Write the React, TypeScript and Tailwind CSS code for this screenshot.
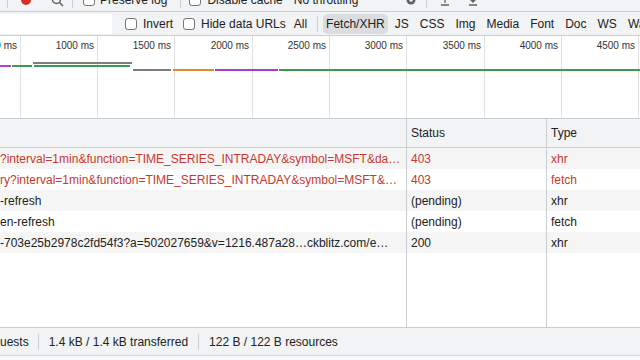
import React from "react";

const tickWidths = [21, 77, 77, 78, 77, 77, 78, 77, 77];
const tickLabels = ["500 ms", "1000 ms", "1500 ms", "2000 ms", "2500 ms", "3000 ms", "3500 ms", "4000 ms", "4500 ms"];

const bars = [
  { left: 33, width: 99, top: 26, cls: "bg-[#7d7d7d]" },
  { left: 0, width: 11, top: 29, cls: "bg-[#b23fcf]" },
  { left: 12, width: 20, top: 29, cls: "bg-[#3c9a52]" },
  { left: 34, width: 96, top: 29, cls: "bg-[#3c9a52]" },
  { left: 133, width: 38, top: 33, cls: "bg-[#7d7d7d]" },
  { left: 173, width: 41, top: 33, cls: "bg-[#e08a2c]" },
  { left: 215, width: 63, top: 33, cls: "bg-[#a63ec2]" },
  { left: 279, width: 361, top: 33, cls: "bg-[#3c9a52]" },
];

const rows = [
  {
    name: "?interval=1min&function=TIME_SERIES_INTRADAY&symbol=MSFT&dat…",
    status: "403",
    type: "xhr",
    error: true,
  },
  {
    name: "ry?interval=1min&function=TIME_SERIES_INTRADAY&symbol=MSFT&d…",
    status: "403",
    type: "fetch",
    error: true,
  },
  { name: "-refresh", status: "(pending)", type: "xhr", error: false },
  { name: "en-refresh", status: "(pending)", type: "fetch", error: false },
  {
    name: "-703e25b2978c2fd54f3?a=502027659&v=1216.487a28…ckblitz.com/e…",
    status: "200",
    type: "xhr",
    error: false,
  },
];

const filters = ["JS", "CSS", "Img", "Media", "Font", "Doc", "WS", "Wasm"];

function Checkbox({ className = "" }: { className?: string }) {
  return <span className={`block w-[12px] h-[12px] shrink-0 rounded-[3px] border border-[#767676] bg-white ${className}`} />;
}

function Sep({ className = "" }: { className?: string }) {
  return <span className={`block w-px h-[16px] bg-[#cbcdd1] shrink-0 ${className}`} />;
}

export default function App() {
  return (
    <div className="w-[640px] h-[360px] overflow-hidden bg-white flex flex-col font-['Liberation_Sans',Arial,sans-serif] text-[12px] text-[#222]">
      {/* Top toolbar, mostly scrolled out of view */}
      <div className="h-[12px] shrink-0 overflow-hidden bg-[#f1f3f4] border-b border-[#cacdd1]">
        <div className="h-[24px] -mt-[12px] flex items-center whitespace-nowrap">
          <Sep className="ml-[7px]" />
          <span className="block ml-[13px] w-[10px] h-[10px] rounded-full bg-[#d93025] shrink-0" />
          <svg className="ml-[20px] shrink-0" width="13" height="13" viewBox="0 0 13 13" fill="none" stroke="#5f6368" strokeWidth="1.5">
            <circle cx="5.5" cy="5.5" r="4" />
            <path d="M8.5 8.5l3.5 3.5" />
          </svg>
          <Sep className="ml-[8px]" />
          <Checkbox className="ml-[10px]" />
          <span className="ml-[5px]">Preserve log</span>
          <Sep className="ml-[13px]" />
          <Checkbox className="ml-[8px]" />
          <span className="ml-[6px]">Disable cache</span>
          <span className="ml-[11px]">No throttling</span>
          <svg className="ml-[47px] shrink-0" width="12" height="12" viewBox="0 0 12 12" fill="#5f6368">
            <circle cx="6" cy="6" r="4.5" />
            <circle cx="6" cy="6" r="1.8" fill="#f1f3f4" />
          </svg>
          <Sep className="ml-[9px]" />
          <svg className="ml-[13px] shrink-0" width="10" height="12" viewBox="0 0 10 12" fill="none" stroke="#5f6368" strokeWidth="1.3">
            <path d="M5 9V2M2 5l3-3 3 3M1 11h8" />
          </svg>
          <svg className="ml-[18px] shrink-0" width="10" height="12" viewBox="0 0 10 12" fill="none" stroke="#5f6368" strokeWidth="1.3">
            <path d="M5 1v7M2 5l3 3 3-3M1 11h8" />
          </svg>
        </div>
      </div>

      {/* Filter row */}
      <div className="h-[24px] shrink-0 flex items-center bg-[#f1f3f4] border-b border-[#cacdd1] whitespace-nowrap">
        <div className="w-[112px] h-[20px] bg-white shrink-0" />
        <Checkbox className="ml-[13px]" />
        <span className="ml-[6px]">Invert</span>
        <Checkbox className="ml-[10px]" />
        <span className="ml-[6px]">Hide data URLs</span>
        <span className="ml-[4px] px-[4px]">All</span>
        <Sep className="ml-[6px]" />
        <span className="ml-[5px] px-[3px] h-[20px] flex items-center rounded-[5px] bg-[#dadce0] shrink-0">Fetch/XHR</span>
        <div className="flex items-center gap-[3px] ml-[3px]">
          {filters.map((f) => (
            <span key={f} className="px-[4px]">{f}</span>
          ))}
        </div>
      </div>

      {/* Timeline overview */}
      <div className="relative h-[83px] shrink-0 flex border-b border-[#cacdd1] bg-white">
        {tickWidths.map((w, i) => (
          <div
            key={i}
            style={{ width: w }}
            className="shrink-0 h-full overflow-hidden border-r border-[#e0e0e0] flex justify-end pr-[3px] pt-[4px] text-[10px] leading-[12px] text-[#333] whitespace-nowrap"
          >
            {tickLabels[i]}
          </div>
        ))}
        {bars.map((b, i) => (
          <div
            key={i}
            className={`absolute h-[2px] ${b.cls}`}
            style={{ left: b.left, width: b.width, top: b.top }}
          />
        ))}
      </div>

      {/* Request table */}
      <div className="flex-1 flex min-h-0 bg-white">
        <div className="w-[406px] shrink-0 flex flex-col">
          <div className="h-[29px] shrink-0 bg-[#f1f3f4] border-b border-[#cacdd1]" />
          {rows.map((r, i) => (
            <div
              key={i}
              className={`h-[21px] shrink-0 flex items-center pr-[3px] whitespace-nowrap overflow-hidden ${i % 2 === 0 ? "bg-[#f5f5f5]" : "bg-white"} ${r.error ? "text-[#c9382e]" : ""}`}
            >
              <span className="truncate">{r.name}</span>
            </div>
          ))}
        </div>
        <div className="w-[140px] shrink-0 flex flex-col border-l border-[#cacdd1]">
          <div className="h-[29px] shrink-0 bg-[#f1f3f4] border-b border-[#cacdd1] flex items-center px-[4px]">Status</div>
          {rows.map((r, i) => (
            <div
              key={i}
              className={`h-[21px] shrink-0 flex items-center px-[4px] ${i % 2 === 0 ? "bg-[#f5f5f5]" : "bg-white"} ${r.error ? "text-[#c9382e]" : ""}`}
            >
              {r.status}
            </div>
          ))}
        </div>
        <div className="flex-1 flex flex-col border-l border-[#cacdd1]">
          <div className="h-[29px] shrink-0 bg-[#f1f3f4] border-b border-[#cacdd1] flex items-center px-[4px]">Type</div>
          {rows.map((r, i) => (
            <div
              key={i}
              className={`h-[21px] shrink-0 flex items-center px-[4px] ${i % 2 === 0 ? "bg-[#f5f5f5]" : "bg-white"} ${r.error ? "text-[#c9382e]" : ""}`}
            >
              {r.type}
            </div>
          ))}
        </div>
      </div>

      {/* Summary bar */}
      <div className="h-[28px] shrink-0 flex items-center bg-[#f1f3f4] border-t border-[#cacdd1] whitespace-nowrap">
        <span className="pr-[9px]">uests</span>
        <Sep />
        <span className="px-[10px]">1.4 kB / 1.4 kB transferred</span>
        <Sep />
        <span className="px-[10px]">122 B / 122 B resources</span>
      </div>
      <div className="h-[5px] shrink-0 bg-[#f8f9fa] border-t border-[#d4d6d9]" />
    </div>
  );
}
